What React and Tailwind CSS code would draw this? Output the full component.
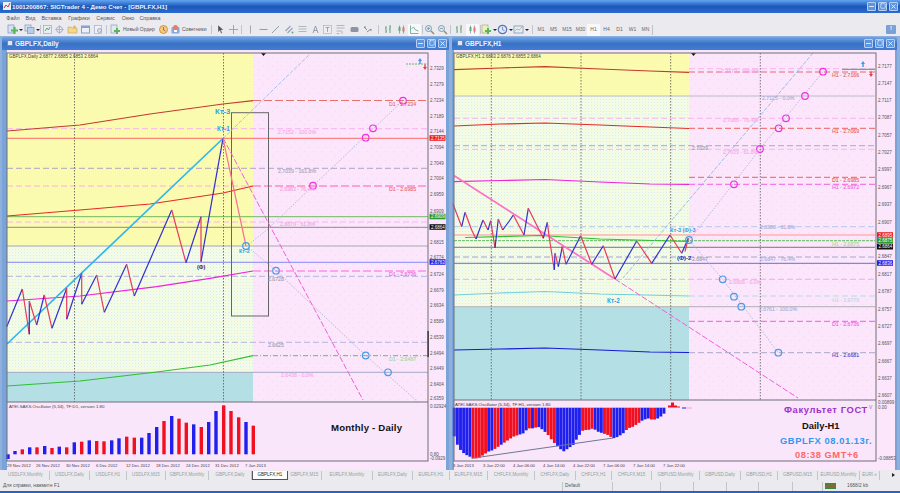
import { X, Minus, Square } from "lucide-react";

const FONT = "'Liberation Sans', Arial, sans-serif";

const MENU = [["Файл", 20], ["Вид", 15], ["Вставка", 27], ["Графики", 28], ["Сервис", 25], ["Окно", 20], ["Справка", 24]];

const TABS = [
  ["USDLFX,Monthly", 48], ["USDLFX,Daily", 40], ["USDLFX,H1", 37], ["USDLFX,M15", 39], ["GBPLFX,Monthly", 43], ["GBPLFX,Daily", 43],
  ["GBPLFX,H1", 36, true], ["GBPLFX,M15", 34], ["EURLFX,Monthly", 51], ["EURLFX,Daily", 40], ["EURLFX,H1", 37], ["EURLFX,M15", 38],
  ["CHFLFX,Monthly", 47], ["CHFLFX,Daily", 41], ["CHFLFX,H1", 36], ["CHFLFX,M15", 40], ["GBPUSD,Monthly", 48], ["GBPUSD,Daily", 41],
  ["GBPUSD,H1", 37], ["GBPUSD,M15", 40], ["EURUSD,Monthly", 42], ["EURI «", 20],
];

// small toolbar drawings, 11x11
function Ico({ name }) {
  const draw = {
    docplus: <><rect x="1" y="1" width="6" height="8" fill="#cfe0f4" stroke="#5878a8" strokeWidth=".7" /><path d="M7.5 3v7M4 6.5h7" stroke="#2aa52a" strokeWidth="2.2" /></>,
    docs: <><rect x="1" y="1" width="6" height="6" fill="#cfe0f4" stroke="#5878a8" strokeWidth=".7" /><rect x="3.5" y="3.5" width="6.5" height="6" fill="#a9c4e6" stroke="#5878a8" strokeWidth=".7" /></>,
    chart: <><rect x="1.5" y="1.5" width="8" height="8" fill="#e8f0f8" stroke="#7a94b8" strokeWidth=".7" /><path d="M3 7l2-3 1.5 2L8 3" stroke="#2a9a2a" fill="none" /></>,
    target: <><circle cx="5.5" cy="5.5" r="3" fill="none" stroke="#8a9ab8" /><path d="M5.5 1v9M1 5.5h9" stroke="#8a9ab8" strokeWidth=".8" /></>,
    folder: <><path d="M1 3h3l1 1h5v5H1z" fill="#f6d36b" stroke="#b08a30" strokeWidth=".6" /><circle cx="7.5" cy="3" r="1.5" fill="#e8a030" /></>,
    window: <><rect x="1.5" y="2" width="8" height="7" fill="#eef3fa" stroke="#6a88b8" /><rect x="1.5" y="2" width="8" height="2" fill="#6a88c8" /></>,
    find: <><rect x="1.5" y="1.5" width="7" height="8" fill="#f2f4f8" stroke="#8a9ab8" strokeWidth=".7" /><circle cx="6.5" cy="6.5" r="2" fill="#cfe0f4" stroke="#5878a8" strokeWidth=".7" /></>,
    order: <><rect x="1" y="1" width="6" height="8" fill="#dfe8f4" stroke="#6a88a8" strokeWidth=".7" /><path d="M7 4v6M4 7h6" stroke="#2aa52a" strokeWidth="2" /></>,
    alert: <><circle cx="5.5" cy="5.5" r="4" fill="#f4c060" stroke="#c87818" /><path d="M5.5 3v3l2 1" stroke="#a04808" fill="none" /></>,
    expert: <><rect x="1.5" y="3" width="8" height="6.5" rx="1" fill="#6a90d8" /><circle cx="5.5" cy="3.5" r="2.5" fill="#e85a30" /><rect x="4" y="6" width="3" height="2" fill="#fff" /></>,
    cursor: <path d="M3 1l5.5 5H6l1.3 3-1.2.5L4.8 6.5 3 8.3z" fill="#222" stroke="#fff" strokeWidth=".3" />,
    cross: <path d="M5.5 1v9M1 5.5h9" stroke="#6a7a90" strokeWidth=".8" />,
    vline: <path d="M5.5 1.5v8" stroke="#8a94a4" strokeWidth="1" />,
    hline: <path d="M1.5 5.5h8" stroke="#7a8494" strokeWidth="1" />,
    trend: <path d="M2 9l7-7" stroke="#7a8494" strokeWidth="1" />,
    channel: <><path d="M1.5 7l5-5M3.5 9l5-5" stroke="#7a8da8" strokeWidth="1.2" /><circle cx="8.5" cy="8.5" r="1" fill="#3a9a3a" /></>,
    fibo: <path d="M1.5 2.500h8M1.5 5h8M1.5 7.500h8" stroke="#8a94a4" strokeWidth=".8" />,
    letter: <path d="M3 9l2.500-7L8 9M4 6.500h3" stroke="#6a7a90" fill="none" strokeWidth=".9" />,
    textbox: <><rect x="1.5" y="1.5" width="8" height="8" fill="#eef0f4" stroke="#8a94a4" strokeWidth=".6" /><path d="M3.500 3.500h4M5.500 3.500v4.500" stroke="#6a7a90" strokeWidth=".8" /></>,
    fibo2: <path d="M1.5 1.500h8M1.500 4h8M1.500 7h5M1.500 9.500h3M7 7v3" stroke="#8a94a4" strokeWidth=".8" />,
    shape: <rect x="1.5" y="3" width="8" height="5" rx="1.5" fill="#70788c" />,
    arrows: <path d="M2 3l3 3M5 8l4-3M2 3h2M9 5v2" stroke="#5a6a80" fill="none" />,
    bars: <path d="M3 2v7M2 4h1M3 7h1M7 1v8M6 5h1M7 3h1" stroke="#3a8a5a" fill="none" />,
    candles: <><path d="M3.500 1.500v8M7.500 1.500v8" stroke="#446" strokeWidth=".6" /><rect x="2.5" y="3" width="2" height="4" fill="#2a9a4a" /><rect x="6.5" y="3.5" width="2" height="4" fill="#d84848" /></>,
    linemode: <path d="M1.500 1.500v8h8M2.500 5l2-2 2 3 3 1" stroke="#2a8a5a" fill="none" strokeWidth=".8" />,
    zoomin: <><circle cx="4.5" cy="4.5" r="3" fill="#d8e8f6" stroke="#5a80b0" /><path d="M7 7l3 3" stroke="#7a6a40" strokeWidth="1.4" /><path d="M3 4.500h3M4.500 3v3" stroke="#3a7a3a" strokeWidth=".7" /></>,
    zoomout: <><circle cx="4.5" cy="4.5" r="3" fill="#d8e8f6" stroke="#5a80b0" /><path d="M7 7l3 3" stroke="#7a6a40" strokeWidth="1.4" /><path d="M3 4.500h3" stroke="#3a7a3a" strokeWidth=".7" /></>,
    addind: <><rect x="1" y="1" width="6" height="8" fill="#eef2a8" stroke="#7a8a58" strokeWidth=".6" /><path d="M7 4v6M4 7h6" stroke="#2aa52a" strokeWidth="2" /></>,
    clock: <><circle cx="5.5" cy="5.5" r="4.2" fill="#dde8f8" stroke="#2a50a8" strokeWidth="1.2" /><path d="M5.500 3v2.700l2 .8" stroke="#2a50a8" fill="none" strokeWidth=".8" /></>,
    tmpl: <><rect x="1" y="2" width="9" height="7" fill="#dff0f0" stroke="#5a7ab0" strokeWidth=".8" /><path d="M2 7l2-2 2 1 3-3" stroke="#d07030" fill="none" strokeWidth=".7" /></>,
  };
  return <svg viewBox="0 0 11 11" className="w-[11px] h-[11px] shrink-0 opacity-75">{draw[name]}</svg>;
}

const Caret = () => <span className="w-0 h-0 border-x-[2px] border-x-transparent border-t-[2px] border-t-[#223] ml-px" />;
const Sep = ({ w = 3 }) => (
  <div className="h-full flex justify-center items-center shrink-0" style={{ width: w }}>
    <div className="w-px h-[9px] bg-[#c4c4ce]" />
  </div>
);

function Tool({ w, icon, caret, on }) {
  return (
    <div className={`h-full flex items-center justify-center shrink-0 ${on ? "bg-[#f8f8fa]" : ""}`} style={{ width: w }}>
      <Ico name={icon} />
      {caret && <Caret />}
    </div>
  );
}

function Toolbar() {
  const tf = [["M1", 12], ["M5", 13], ["M15", 14], ["M30", 13], ["H1", 13, true], ["H4", 13], ["D1", 13], ["W1", 13], ["MN", 13]];
  const drawTools = [["vline", 14], ["hline", 12], ["trend", 13], ["channel", 14], ["fibo", 13], ["letter", 12], ["textbox", 13], ["fibo2", 13], ["shape", 14], ["arrows", 13]];
  return (
    <div className="h-[12px] bg-[#ebebef] flex items-center pl-[6px] text-[5px] text-[#66666f] relative">
      <Tool w={17} icon="docplus" caret />
      <Tool w={17} icon="docs" caret />
      <Sep w={1} />
      <Tool w={12} icon="chart" />
      {[["target", 13], ["folder", 13], ["window", 13], ["find", 13]].map(([n, w]) => <Tool key={n} w={w} icon={n} />)}
      <Sep />
      <div className="w-[49px] h-full flex items-center pl-[2px] gap-[2px] shrink-0"><Ico name="order" /><span className="whitespace-nowrap text-[#555]">Новый Ордер</span></div>
      <Tool w={13} icon="alert" />
      <div className="w-[39px] h-full flex items-center gap-[1px] shrink-0"><Ico name="expert" /><span className="whitespace-nowrap text-[#555]">Советники</span></div>
      <Sep w={5} />
      {[["cursor", 12], ["cross", 14]].map(([n, w]) => <Tool key={n} w={w} icon={n} />)}
      <Sep />
      {drawTools.map(([n, w]) => <Tool key={n} w={w} icon={n} />)}
      <Sep w={8} />
      <Tool w={13} icon="bars" />
      <Tool w={13} icon="candles" />
      <Tool w={13} icon="linemode" on />
      <Sep w={2} />
      <Tool w={13} icon="zoomin" />
      <Tool w={13} icon="zoomout" />
      <Sep />
      <Tool w={14} icon="bars" />
      <Tool w={13} icon="candles" on />
      <Sep w={2} />
      <Tool w={16} icon="addind" caret />
      <Tool w={16} icon="clock" caret />
      <Tool w={16} icon="tmpl" caret />
      <Sep w={6} />
      {tf.map(([t, w, on]) => (
        <div key={t} className={`h-full flex items-center justify-center shrink-0 ${on ? "bg-[#f8f8fa]" : ""}`} style={{ width: w }}>{t}</div>
      ))}
      <div className="w-px h-[10px] bg-[#c0c0c8]" />
      <div className="absolute right-[4px] top-[1px] w-[10px] h-[9px] rounded-[1px] bg-[#7da0d8] flex items-start justify-center text-[6px] leading-[7px] text-white font-bold">!</div>
    </div>
  );
}

function WinButtons() {
  const cls = "w-[9px] h-[9px] border border-[#b8d0f0] rounded-[1px] bg-[#5f95e0] flex items-center justify-center text-[#eef4fc]";
  return (
    <div className="flex gap-[2px] mr-[2px]">
      <div className={cls}><Minus size={7} strokeWidth={3} /></div>
      <div className={cls}><Square size={6} strokeWidth={2.5} /></div>
      <div className={cls}><X size={7} strokeWidth={3} /></div>
    </div>
  );
}

const Lines = ({ data }) => data.map(([y, x1, x2, c, w, d], i) => (
  <line key={i} x1={x1} x2={x2} y1={y} y2={y} stroke={c} strokeWidth={w} strokeDasharray={d} />
));
const Labels = ({ data }) => data.map(([t, x, y, c], i) => (
  <text key={i} x={x} y={y} fill={c} stroke={c} strokeWidth=".1" fontSize="5.2">{t}</text>
));
const Rings = ({ data, c }) => data.map(([x, y], i) => (
  <circle key={i} cx={x} cy={y} r="3.3" fill="none" stroke={c} strokeWidth="1.2" />
));
const Zig = ({ pts }) => pts.slice(1).map((p, i) => (
  <line key={i} x1={pts[i][0]} y1={pts[i][1]} x2={p[0]} y2={p[1]} stroke={p[1] < pts[i][1] ? "#3030d0" : "#e83a5a"} strokeWidth="1.2" />
));
const Axis = ({ x, data }) => data.map(([t, y], i) => (
  <text key={i} x={x} y={y + 1.6} fontSize="4.5" fill="#555">{t}</text>
));
const Badge = ({ x, y, t, c }) => (
  <g>
    <rect x={x} y={y - 2.8} width="16" height="5.6" fill={c} />
    <text x={x + 1.5} y={y + 1.6} fontSize="4.5" fill="#fff">{t}</text>
  </g>
);
const Curve = ({ pts, c, w = 1.2 }) => <polyline points={pts} fill="none" stroke={c} strokeWidth={w} />;

function Patterns({ id }) {
  return (
    <defs>
      <pattern id={`${id}y`} width="2" height="2" patternUnits="userSpaceOnUse">
        <rect width="2" height="2" fill="#ffff84" /><rect width="1" height="1" fill="#ffffb4" />
      </pattern>
      <pattern id={`${id}g`} width="3" height="3" patternUnits="userSpaceOnUse">
        <rect width="3" height="3" fill="#f3fbe9" /><rect width="1" height="1" fill="#d4eef0" /><rect x="1.5" y="1.5" width="1" height="1" fill="#fbfbc8" />
      </pattern>
      <pattern id={`${id}p`} width="9" height="9" patternUnits="userSpaceOnUse">
        <rect width="9" height="9" fill="#fbe6fb" /><rect x="2" y="3" width="1" height="1" fill="#f4d8ee" /><rect x="7" y="7" width="1" height="1" fill="#f4d8ee" />
      </pattern>
    </defs>
  );
}

const FRAME = "#6f6f78";

function DailyChart() {
  const lvl = [
    [100.5, 253, 428, "#e8706a", 1, "8 3"], [128.7, 7, 428, "#f8b4ee", 1, "6 3"], [138.3, 7, 428, "#ff6a6a", 1],
    [168.3, 7, 428, "#b0a4c8", 1, "6 3"], [186, 7, 253, "#f9b0e8", 1, "6 3"], [186, 253, 428, "#ff8ac8", 1.5, "8 3"],
    [216.7, 7, 428, "#70b860", 1], [222, 7, 428, "#f8b4ee", 1, "6 3"], [227.3, 7, 428, "#8a8a8a", 1], [246, 7, 428, "#a8a8b8", 1],
    [262.3, 7, 428, "#8888f8", 1], [271, 253, 428, "#fb90e8", 1.5, "8 3"], [276.3, 7, 428, "#b4b4e0", 1, "6 3"],
    [342.3, 7, 428, "#b4b4e0", 1, "6 3"], [355.7, 253, 428, "#60c060", 1, "5 2 1 2"], [372.3, 7, 428, "#a8a8c8", 1],
  ];
  const text = [
    ["D1 - 2.7234", 389, 106, "#e07070"], ["2.7152 - 100.0%", 278, 134, "#f8a8e8"], ["2.7039 - 161.8%", 278, 173, "#b0a4b8"],
    ["2.6983 - 76.4%", 280, 191, "#f8a0e0"], ["D1 - 2.6985", 389, 191, "#f06868"], ["2.6879 - 61.8%", 280, 226, "#f0a8e8"],
    ["D1 - 2.6736", 389, 276, "#f060e0"], ["2.6728", 268, 281, "#a0a0a8"], ["2.6625", 268, 347, "#a0a0a8"],
    ["D1 - 2.6497", 389, 361, "#a0d8a0"], ["2.6438 - 0.0%", 281, 377, "#f8a8e8"],
  ];
  const axis = [
    ["2.7329", 68], ["2.7279", 84], ["2.7234", 100], ["2.7189", 116], ["2.7144", 131], ["2.7094", 147], ["2.7049", 163], ["2.7004", 178],
    ["2.6959", 194], ["2.6909", 211], ["2.6815", 242], ["2.6774", 257], ["2.6724", 274], ["2.6679", 290], ["2.6634", 305], ["2.6589", 321],
    ["2.6539", 337], ["2.6494", 353], ["2.6449", 368], ["2.6404", 384], ["2.6359", 398], ["0.02924", 406], ["0.80", 454], ["-0.0929", 458],
  ];
  const zig = [
    [6.7, 326.7], [22.3, 289], [29.3, 334.3], [29.3, 301], [36.7, 325], [44.3, 295], [52, 328.3], [66.7, 288.3], [66.7, 319.3], [81.7, 273.3],
    [81.7, 304.3], [96.7, 275], [104.3, 312.3], [126.7, 264.3], [134.3, 296], [171.7, 210], [186, 262.7], [201, 216.7], [201, 261.7], [223, 138.3],
  ];
  const bars = [
    [8, 192, "b"], [15, 168, "b"], [22.3, 163, "r"], [29.7, 157, "b"], [37, 157, "r"], [44.7, 153, "b"], [52, 159, "r"], [59.3, 155, "b"], [66.7, 157, "r"],
    [74.3, 142, "b"], [81.7, 140, "r"], [89.3, 136, "b"], [96.7, 138, "r"], [104, 139, "r"], [111.7, 136, "b"], [119, 130, "b"], [126.7, 125, "r"], [134.3, 128, "r"],
    [141.7, 128, "b"], [149, 114, "b"], [156.7, 96, "b"], [164, 78, "r"], [171.7, 63, "b"], [179, 71, "r"], [186.3, 83, "r"], [193.7, 88, "b"], [201.3, 96, "r"],
    [208.7, 81, "b"], [216, 48, "b"], [223.7, 31, "r"], [231, 48, "r"], [238.7, 67, "r"], [246, 81, "b"], [253.3, 92, "r"],
  ];
  const dates = [
    ["29 Nov 2012", 7], ["26 Nov 2012", 36], ["30 Nov 2012", 66], ["6 Dec 2012", 96], ["12 Dec 2012", 126], ["18 Dec 2012", 156],
    ["24 Dec 2012", 186], ["31 Dec 2012", 215], ["7 Jan 2013", 245],
  ];
  return (
    <svg viewBox="2 50 447 420" className="w-[447px] h-[420px] block" style={{ fontFamily: FONT }}>
      <Patterns id="a" />
      <rect x="2" y="50" width="447" height="420" fill="#fbe6fb" />
      <rect x="2" y="50" width="5" height="420" fill="#7aa3d8" />
      <rect x="446" y="50" width="3" height="420" fill="#7aa3d8" />
      <rect x="253" y="53" width="175" height="349" fill="url(#ap)" />
      <rect x="7" y="53" width="246" height="193" fill="url(#ay)" />
      <rect x="7" y="246" width="246" height="126" fill="url(#ag)" />
      <rect x="7" y="372" width="246" height="30" fill="#b3dfe5" />
      <Lines data={lvl} />
      {[74.5, 223.5].map((x) => <line key={x} x1={x} x2={x} y1="53" y2="461" stroke="#555" strokeWidth=".8" strokeDasharray="1.5 1.5" />)}
      <Curve pts="7,131 80,125 150,114 223,104 253,100.7" c="#c43a30" />
      <Curve pts="7,216 80,210 150,204 223,193 253,186" c="#e82828" />
      <Curve pts="7,301 80,296 156.7,286.7 210,278.3 253,271" c="#f020e0" />
      <Curve pts="7,386 80,381 156.7,372 210,365 253,355.7" c="#30c030" />
      <rect x="231.5" y="112.7" width="37" height="203.3" fill="none" stroke="#666" strokeWidth="1" />
      <line x1="7" y1="344" x2="223" y2="138.5" stroke="#30b8ea" strokeWidth="1.7" />
      <line x1="223" y1="138.5" x2="310" y2="54" stroke="#a8b8e0" strokeWidth=".9" strokeDasharray="4 1.5" />
      <polyline points="403,100.7 313,185.7 268,229 246.7,246 276,270.7 365.7,355.5 418,402" fill="none" stroke="#b0b4d4" strokeWidth=".9" strokeDasharray="1.5 1.5" />
      <line x1="223" y1="138" x2="363" y2="400" stroke="#f060dc" strokeWidth="1" strokeDasharray="6 2" />
      <Zig pts={zig} />
      <line x1="223" y1="138.3" x2="246" y2="246" stroke="#f87090" strokeWidth="1.2" />
      <Rings data={[[403, 100.7], [373, 128.3], [365.7, 137.7], [313, 185.7]]} c="#f030e0" />
      <Rings data={[[246, 246], [276, 270.7], [365.7, 355.5], [388, 372.3]]} c="#4a9ae8" />
      <Labels data={text} />
      <text x="215" y="114" fontSize="7.7" fontWeight="700" fill="#30a0e8">Кт-3</text>
      <text x="217" y="131" fontSize="6.4" fontWeight="700" fill="#30a0e8">Кт-1</text>
      <text x="239" y="252.500" fontSize="5.4" fontWeight="700" fill="#30a0e8">Кт-2</text>
      <text x="197" y="269" fontSize="5.4" fontWeight="700" fill="#202070">(Ф)</text>
      <text x="9" y="58" fontSize="4.5" fill="#444">GBPLFX,Daily  2.6877 2.6885 2.6853 2.6864</text>
      <path d="M261 53h5l-2.500 3z" fill="#111" />
      <rect x="7" y="402" width="421" height="59" fill="#fae6fb" />
      <line x1="7" y1="402" x2="428" y2="402" stroke={FRAME} strokeWidth="1" />
      {bars.map(([x, top, c], i) => {
        const y = 395 + top / 3;
        return <rect key={i} x={x - 1.7} y={Math.min(y, 454.3)} width="3.4" height={Math.abs(454.3 - y)} fill={c === "b" ? "#2020ee" : "#f01020"} />;
      })}
      <text x="9" y="408" fontSize="4.4" fill="#444">ATEI.SAKS.Oscillator (5,34), TF:D1, version 1.80</text>
      <text x="331" y="431" fontSize="9.6" fontWeight="700" fill="#111" letterSpacing=".2">Monthly - Daily</text>
      <rect x="7" y="53" width="421" height="408" fill="none" stroke={FRAME} strokeWidth="1" />
      <rect x="427.5" y="331" width="1.200" height="26" fill="#222" />
      <Axis x={430} data={axis} />
      <path d="M420 58l2 3h-1.300v3h-1.400v-3H418z" fill="#3a9ae8" />
      <line x1="406" x2="428" y1="64" y2="64" stroke="#60b860" strokeDasharray="2 1" />
      <path d="M425 70l-2-3h1.300v-2.500h1.400V67H427z" fill="#e84040" />
      <Badge x={429.5} y={138} t="2.7135" c="#ee1c1c" />
      <Badge x={429.5} y={216.5} t="2.6909" c="#2e9a2e" />
      <Badge x={429.5} y={227} t="2.6864" c="#111" />
      <Badge x={429.5} y={262} t="2.6763" c="#2222e8" />
      {dates.map(([t, x]) => <text key={t} x={x} y="467" fontSize="4.2" fill="#444">{t}</text>)}
    </svg>
  );
}

const interp = (pts, x) => {
  for (let i = 1; i < pts.length; i++) {
    if (x <= pts[i][0]) {
      const [a, b] = [pts[i - 1], pts[i]];
      return a[1] + ((b[1] - a[1]) * (x - a[0])) / (b[0] - a[0]);
    }
  }
  return pts[pts.length - 1][1];
};

function HourChart() {
  const lvl = [
    [68.7, 689, 875, "#f8b4ee", 1, "6 3"], [72, 689, 875, "#e86a6a", 1, "6 3"], [96, 454, 875, "#bcbcc8", 1],
    [118.3, 454, 875, "#f8b4ee", 1, "6 3"], [128.3, 689, 875, "#f06060", 1, "6 3"], [145.7, 454, 875, "#b0a4c8", 1, "6 3"],
    [149.3, 454, 875, "#f8b4ee", 1, "6 3"], [177.3, 689, 875, "#f06060", 1, "6 3"], [184.3, 689, 875, "#f060e8", 1, "6 3"],
    [226.7, 454, 875, "#b4c8e8", 1, "6 3"], [235, 454, 875, "#ffb0b0", 1.6], [240.7, 454, 875, "#60b860", 1, "3 1"],
    [247.3, 454, 875, "#787878", 1], [257, 454, 875, "#c0c0d8", 1.4, "6 3"], [263.3, 454, 875, "#6a6ae8", 1],
    [279.3, 454, 875, "#f8a8f0", 1, "6 3"], [296, 689, 875, "#b8dce8", 1, "6 3"], [306.7, 454, 875, "#b0b0b8", 1],
    [321.3, 689, 875, "#f858e8", 1, "6 3"], [352.7, 689, 875, "#a8a8c8", 1, "6 3"],
  ];
  const text = [
    ["2.7173 - 100.0%", 721, 73, "#f8a8e8"], ["H1 - 2.7166", 832, 77, "#e06868"], ["2.7125 - 0.0%", 762, 100, "#a8b0d8"],
    ["2.7086 - 76.4%", 723, 122, "#f8a8e8"], ["H1 - 2.7069", 832, 133, "#f06060"], ["2.7039", 692, 150, "#a0a0a8"],
    ["2.7033 - 61.8%", 723, 154, "#f8a8e8"], ["D1 - 2.6985", 832, 182, "#f06060"], ["H1 - 2.6972", 832, 189, "#f060e8"],
    ["2.6980 - 61.8%", 760, 229, "#a8b0d8"], ["H1 - 2.6875", 832, 246, "#a0d8a0"], ["2.6847", 692, 261, "#a0a0a8"],
    ["2.6847 - 76.4%", 760, 261, "#a8b0d8"], ["2.6808 - 0.0%", 729, 284, "#f8a8e8"], ["H1 - 2.6776", 832, 302, "#b8dce0"],
    ["2.6761 - 100.0%", 759, 311, "#a8b0d8"], ["D1 - 2.6736", 832, 326, "#f060e0"], ["H1 - 2.6681", 832, 357, "#4848c8"],
  ];
  const axis = [
    ["2.7177", 66], ["2.7147", 83], ["2.7117", 100], ["2.7087", 117], ["2.7057", 135], ["2.7027", 152], ["2.6997", 169], ["2.6967", 187],
    ["2.6937", 204], ["2.6907", 222], ["2.6847", 256], ["2.6817", 274], ["2.6787", 291], ["2.6757", 309], ["2.6727", 326], ["2.6697", 343],
    ["2.6667", 361], ["2.6637", 378], ["2.6607", 395], ["0.00899", 402], ["0.00", 407], ["-0.08853", 458],
  ];
  const zig = [
    [453, 204], [461.7, 226.7], [465, 212.3], [471.7, 230], [476, 239], [483, 220], [488, 230], [490.7, 220.7], [495, 248], [498.3, 219], [502.7, 230], [509.3, 221],
    [513.3, 215], [524, 235], [528.3, 208.3], [543.3, 238.3], [547.3, 222.3], [549.3, 238], [554.3, 270], [555, 253.3], [558.3, 266.7], [562.3, 246.7], [566, 264.3],
    [580.7, 235.7], [591.7, 264.3], [603.3, 245.7], [615, 279], [636.7, 241], [651.7, 263.3], [670, 235], [681.7, 253.3], [688.3, 238.3], [685, 251.7],
  ];
  const depth = [
    [0, 100], [15, 145], [30, 170], [45, 180], [65, 190], [80, 190], [95, 180], [110, 170], [125, 165], [140, 155], [155, 145], [170, 135], [185, 125], [200, 120], [215, 115],
    [230, 100], [245, 100], [260, 95], [275, 105], [290, 120], [305, 140], [320, 155], [335, 170], [350, 160], [365, 150], [380, 125], [395, 105], [410, 105], [425, 100], [440, 110],
    [455, 115], [470, 120], [485, 130], [500, 125], [515, 115], [530, 100], [545, 95], [560, 85], [575, 75], [590, 70], [605, 75], [620, 70], [635, 60], [645, 45],
  ];
  const reds = [[60, 105], [125, 140], [150, 200], [230, 240], [250, 260], [285, 310], [385, 430], [455, 485], [525, 570], [600, 610]];
  const bars = Array.from({ length: 68 }, (_, i) => {
    const zx = 8 + i * 9.4;
    const isRed = reds.some(([a, b]) => zx >= a && zx <= b);
    return { x: 452.8 + i * 3.13, h: (interp(depth, zx) - 38) / 3, c: isRed ? "#f01020" : "#2020ee" };
  });
  const dates = [
    ["3 Jan 2013", 453], ["3 Jan 22:00", 483], ["4 Jan 06:00", 513], ["4 Jan 14:00", 543], ["4 Jan 22:00", 573], ["7 Jan 06:00", 603], ["7 Jan 14:00", 633], ["7 Jan 22:00", 663],
  ];
  return (
    <svg viewBox="452 50 445 420" className="w-[445px] h-[420px] block" style={{ fontFamily: FONT }}>
      <Patterns id="b" />
      <rect x="452" y="50" width="445" height="420" fill="#fbe6fb" />
      <rect x="452" y="50" width="2" height="420" fill="#7aa3d8" />
      <rect x="895" y="50" width="2" height="420" fill="#7aa3d8" />
      <rect x="689" y="53" width="187" height="347" fill="url(#bp)" />
      <rect x="454" y="53" width="235" height="43" fill="url(#by)" />
      <rect x="454" y="96" width="235" height="211" fill="url(#bg)" />
      <rect x="454" y="307" width="235" height="93" fill="#b3dfe5" />
      <Lines data={lvl} />
      {[491.3, 581, 670.7, 760.3].map((x) => <line key={x} x1={x} x2={x} y1="53" y2="461" stroke="#555" strokeWidth=".8" strokeDasharray="1.5 1.5" />)}
      <Curve pts="454,69.7 500,68 545,66.700 600,69 650,71 689,72.300" c="#c43a30" />
      <Curve pts="454,126 500,124 545,123 600,125 650,127 689,128.500" c="#e82828" />
      <Curve pts="454,181.7 500,180.500 545,179.500 600,182 650,184 689,184.300" c="#f020e0" />
      <Curve pts="465,237.500 540,235.500 600,239 689,241.500" c="#30c030" />
      <Curve pts="454,295 500,293 545,291.500 600,294 689,296" c="#70cfe0" w={1.1} />
      <Curve pts="454,350 500,349 545,348 600,350 650,352 689,352.500" c="#1818d8" />
      <line x1="813" y1="53" x2="623" y2="278" stroke="#90b8e4" strokeWidth=".9" strokeDasharray="4 1.500" />
      <polyline points="823,71.7 760,149 700,226.7 689,240 722.7,279.3 778.300,352.700" fill="none" stroke="#b0b4d4" strokeWidth=".9" strokeDasharray="1.5 1.5" />
      <line x1="453" y1="175" x2="615" y2="279" stroke="#ff70c8" strokeWidth="1.7" />
      <line x1="615" y1="279" x2="798" y2="398" stroke="#f060dc" strokeWidth="1" strokeDasharray="6 2" />
      <Zig pts={zig} />
      <Rings data={[[823, 71.7], [805, 96], [786, 118.3], [778.7, 128.3], [760, 149], [734, 184.3]]} c="#f030e0" />
      <Rings data={[[689, 240], [722.7, 279.3], [734, 296.7], [741.3, 306.7], [778.3, 352.7]]} c="#4a9ae8" />
      <Labels data={text} />
      <text x="607" y="303" fontSize="6.4" fontWeight="700" fill="#30a0e8">Кт-2</text>
      <text x="670" y="232" fontSize="5.6" fontWeight="700" fill="#30a0e8">Кт-3</text>
      <text x="682.500" y="232" fontSize="5.4" fontWeight="700" fill="#30a0e8">(Ф)-3</text>
      <text x="677" y="260" fontSize="6" fontWeight="700" fill="#2030b0">(Ф)-2</text>
      <text x="456" y="58" fontSize="4.5" fill="#444">GBPLFX,H1  2.6863 2.6876 2.6855 2.6864</text>
      <path d="M691 53h5l-2.500 3z" fill="#111" />
      <rect x="454" y="400" width="422" height="61" fill="#fae6fb" />
      <line x1="454" y1="400" x2="876" y2="400" stroke={FRAME} strokeWidth="1" />
      {bars.map((b, i) => <rect key={i} x={b.x} y="407.700" width="2.900" height={b.h} fill={b.c} />)}
      <path d="M665 407.500h3v-2h3v-3h3v3h3v1h3v1z" fill="#f01020" />
      <path d="M682 407.500h4v1h-4z" fill="#2020ee" />
      <path d="M686 407.500h6v1h-6z" fill="#f4a0d8" />
      <line x1="471.7" y1="458.3" x2="613" y2="438" stroke="#70788c" strokeWidth="1" />
      <text x="455" y="406" fontSize="4.4" fill="#333">ATEI.SAKS.Oscillator (5,34), TF:H1, version 1.80</text>
      <text x="784" y="413" fontSize="9.400" fontWeight="700" fill="#a030c8" letterSpacing=".6">Факультет ГОСТ</text>
      <text x="869" y="409" fontSize="5" fill="#8a80b0">V</text>
      <text x="802" y="429" fontSize="9.400" fontWeight="700" fill="#111">Daily-H1</text>
      <text x="780" y="444" fontSize="9.400" fontWeight="700" fill="#3098f0" letterSpacing=".55">GBPLFX 08.01.13г.</text>
      <text x="795" y="458" fontSize="9.400" fontWeight="700" fill="#ff6868" letterSpacing=".5">08:38 GMT+6</text>
      <rect x="454" y="53" width="422" height="408" fill="none" stroke={FRAME} strokeWidth="1" />
      <Axis x={878} data={axis} />
      <path d="M863 61l2 3h-1.300v3h-1.400v-3H861z" fill="#3a9ae8" />
      <line x1="842" x2="875" y1="69.300" y2="69.300" stroke="#40a840" />
      <path d="M871 77l-2-3h1.300v-2.500h1.400V74H873z" fill="#e84040" />
      <Badge x={877} y={235} t="2.6895" c="#ee1c1c" />
      <Badge x={877} y={240.800} t="2.6875" c="#2e9a2e" />
      <Badge x={877} y={246.700} t="2.6864" c="#111" />
      <Badge x={877} y={263} t="2.6836" c="#2222e8" />
      {dates.map(([t, x]) => <text key={t} x={x} y="467" fontSize="4.2" fill="#444">{t}</text>)}
    </svg>
  );
}

function ChildWindow({ title, w, children }) {
  return (
    <div className="flex flex-col shrink-0" style={{ width: w }}>
      <div className="h-[13px] flex items-center justify-between pl-[5px] rounded-t-[2px] bg-linear-to-b from-[#6ea6ea] via-[#3a72c4] to-[#3f7dd6]">
        <div className="flex items-center gap-[2px] text-[#eef4fc] text-[6.5px] font-bold">
          <div className="w-[6px] h-[6px] bg-[#dce8fa] border border-[#6a88c0]" />
          {title}
        </div>
        <WinButtons />
      </div>
      {children}
    </div>
  );
}

export default function App() {
  return (
    <div className="w-[900px] h-[493px] overflow-hidden flex flex-col bg-[#ebebef]" style={{ fontFamily: FONT }}>
      <div className="h-[13px] flex items-center justify-between bg-linear-to-b from-[#62a4f2] via-[#1c58b8] to-[#2c6cd0]">
        <div className="flex items-center gap-[1px] pl-[3px] text-[#eef4fc] text-[6.2px] font-bold">
          <svg viewBox="0 0 8 8" className="w-[8px] h-[8px]"><rect width="8" height="8" fill="#e8f0f8" /><path d="M1 6l2-3 2 2 2-4" stroke="#d03030" fill="none" /></svg>
          1001200867: SIGTrader 4 - Демо Счет - [GBPLFX,H1]
        </div>
        <WinButtons />
      </div>
      <div className="h-[11px] flex items-center pl-[3px] bg-[#ebebef] text-[5.4px] text-[#555]">
        {MENU.map(([m, w]) => <div key={m} className="flex justify-center shrink-0" style={{ width: w }}>{m}</div>)}
      </div>
      <Toolbar />
      <div className="h-[435px] flex gap-[3px] pl-[2px] pt-[1px] bg-[#8fb0dc]">
        <ChildWindow title="GBPLFX,Daily" w={447}><DailyChart /></ChildWindow>
        <ChildWindow title="GBPLFX,H1" w={445}><HourChart /></ChildWindow>
      </div>
      <div className="h-[11px] flex items-center pl-[2px] text-[4.5px] text-[#9a9aa4] bg-[#ebebef] relative">
        {TABS.map(([t, w, on]) => (
          <div key={t} style={{ width: w }} className={`h-[9px] shrink-0 flex items-center justify-center whitespace-nowrap ${on ? "bg-white text-[#222] border border-[#555] border-t-0" : "border-r border-r-[#c4c4cc]"}`}>{t}</div>
        ))}
        <span className="absolute right-[5px] top-[3px] w-0 h-0 border-y-[2px] border-y-transparent border-l-[3px] border-l-[#222]" />
      </div>
      <div className="h-[10px] flex items-center text-[4.8px] text-[#555] bg-[#ebebef]">
        <div className="w-[562px] pl-[3px] shrink-0">Для справки, нажмите F1</div>
        {[["Default", 50], ["", 48], ["", 33], ["", 33], ["", 32], ["", 34], ["", 30]].map(([t, w], i) => (
          <div key={i} className="h-[9px] border-l border-l-[#c4c4cc] pl-[2px] flex items-center shrink-0" style={{ width: w }}>{t}</div>
        ))}
        <div className="h-[9px] w-[58px] border-l border-l-[#c4c4cc] flex items-center pl-[2px] gap-[11px]">
          <svg viewBox="0 0 11 6" className="w-[11px] h-[6px]"><rect width="11" height="6" fill="#3a8a3a" /><path d="M1 5V2M3 5V1M5 5V3M7 5V1M9 5V2" stroke="#e04040" /></svg>
          1688/2 kb
        </div>
      </div>
      <div className="h-[2px] bg-[#2a64c0]" />
    </div>
  );
}
